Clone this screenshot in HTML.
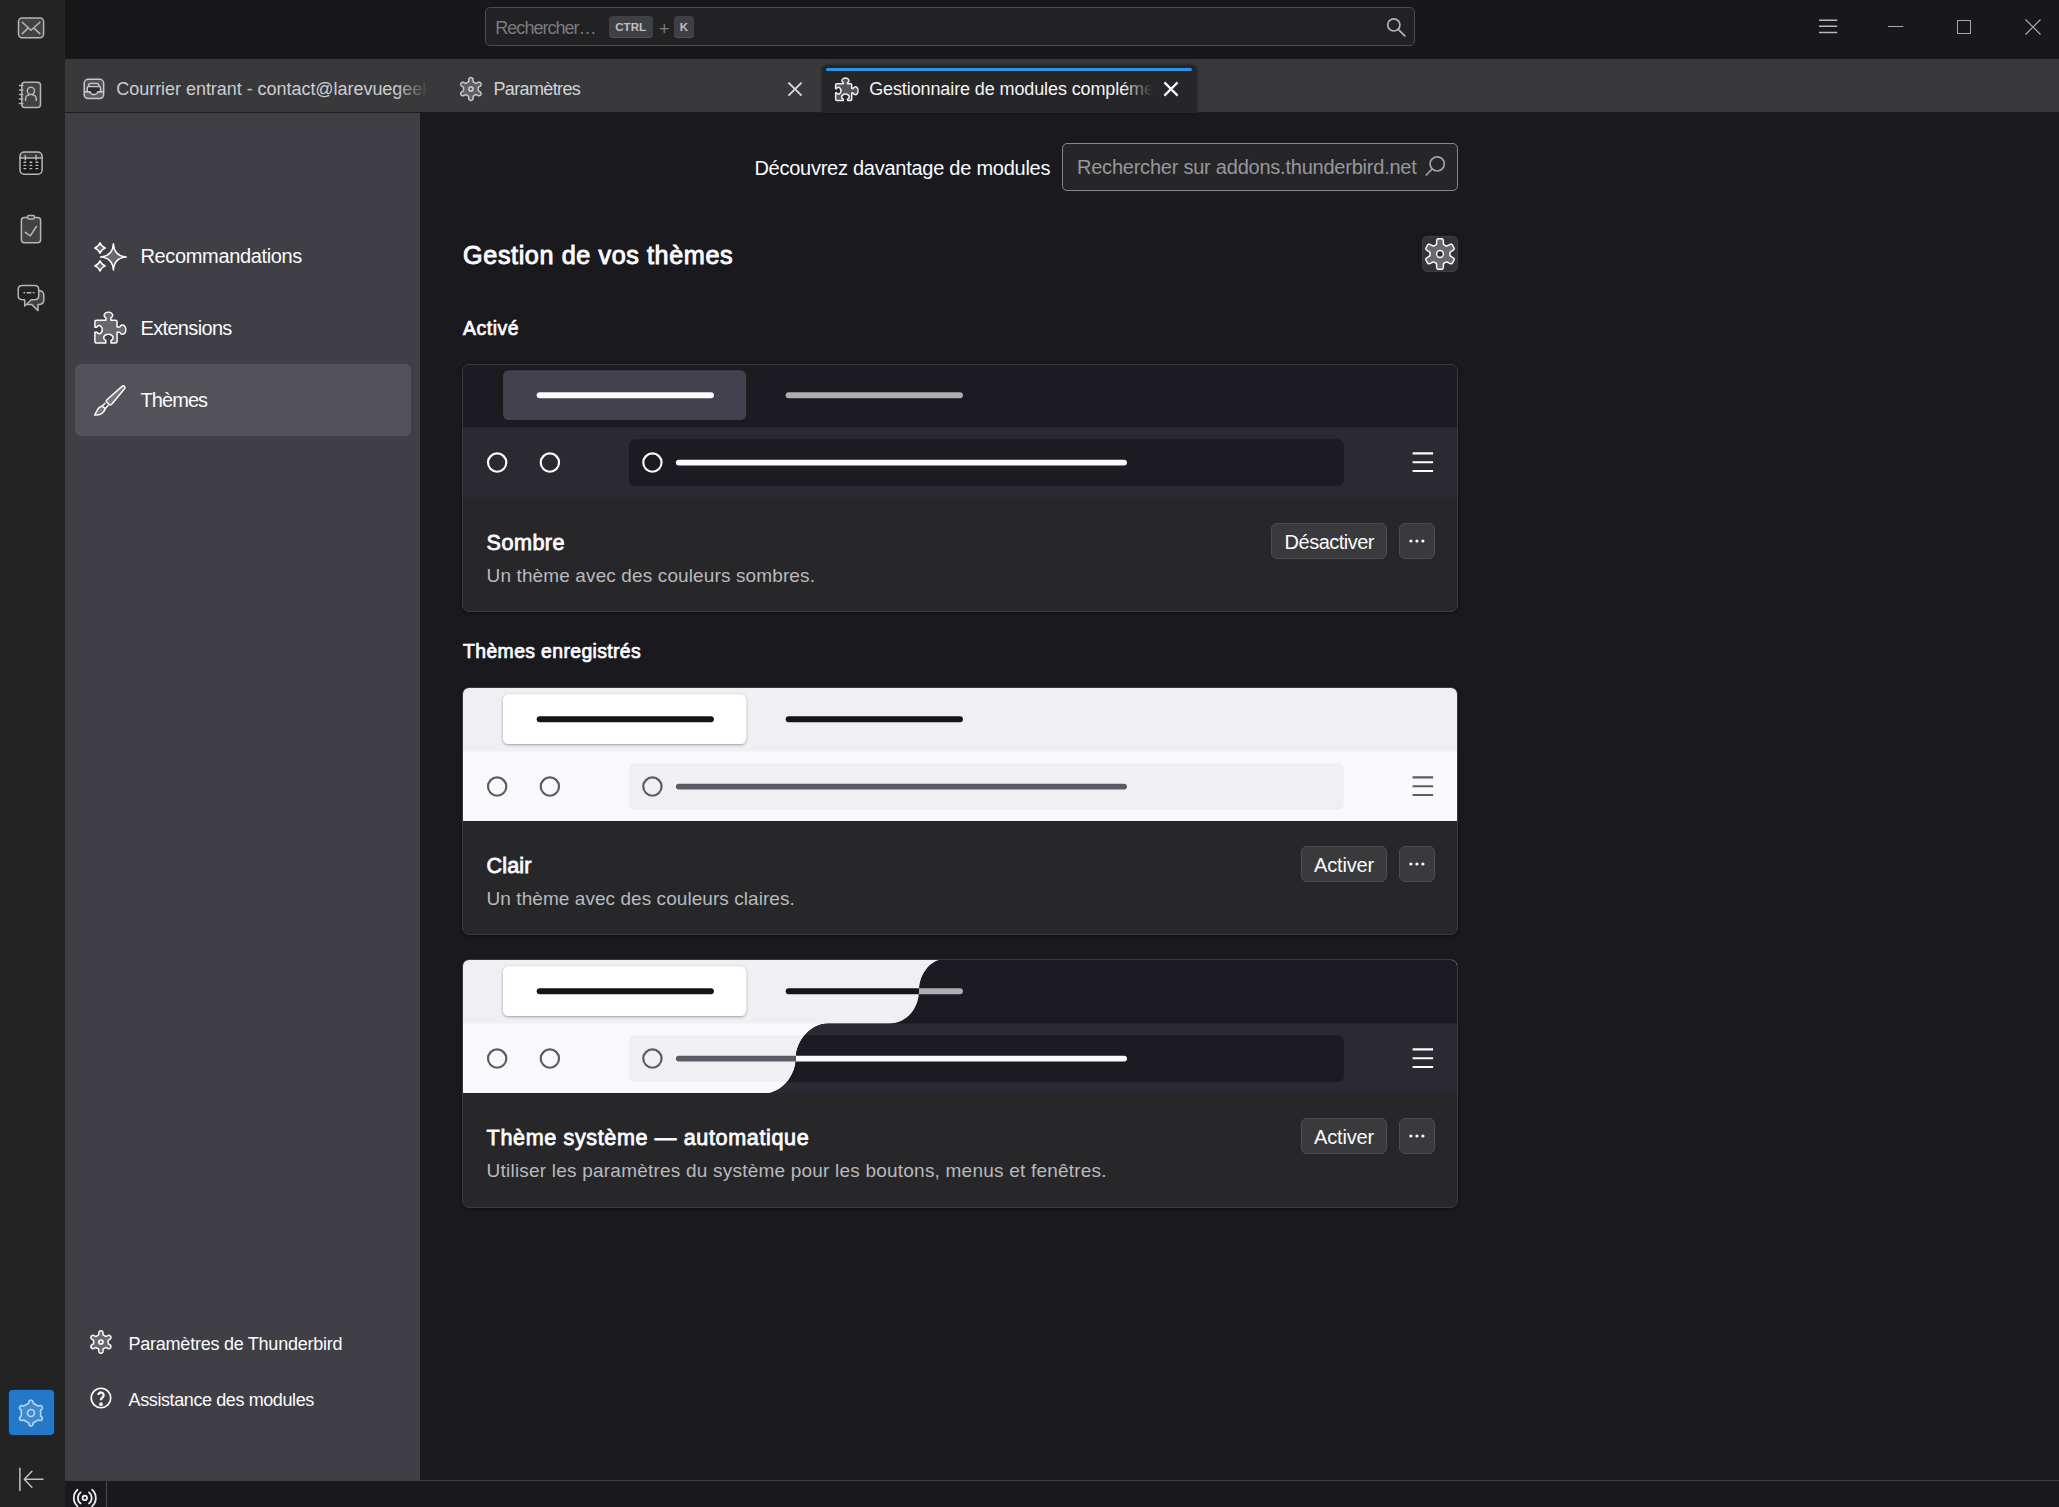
<!DOCTYPE html>
<html lang="fr">
<head>
<meta charset="utf-8">
<title>Gestionnaire de modules complémentaires</title>
<style>
*{box-sizing:border-box;margin:0;padding:0}
html,body{width:2059px;height:1507px;overflow:hidden;background:#1a1a1e;font-family:"Liberation Sans",sans-serif}
.abs{position:absolute}
.t{position:absolute;white-space:pre;font-family:"Liberation Sans",sans-serif}
svg{position:absolute;overflow:visible}
#rail{left:0;top:0;width:65px;height:1507px;background:#232324}
#titlebar{left:65px;top:0;width:1994px;height:59px;background:#18181b}
#tabbar{left:65px;top:59px;width:1994px;height:54px;background:#39393c;border-bottom:1px solid #1d1d20}
#sidebar{left:65px;top:113px;width:355px;height:1367px;background:#3f3f45}
#content{left:420px;top:113px;width:1639px;height:1367px;background:#1a1a1e}
#status{left:65px;top:1480px;width:1994px;height:27px;background:#19191c;border-top:1px solid #3c3c41}
#gsearch{left:485px;top:7px;width:930px;height:39px;border:1px solid #4b4b50;border-radius:5px;background:#222225}
.kbd{background:#3f3f46;border-radius:4px;box-shadow:0 1px 0 #52525a}
#atab{left:822px;top:65px;width:375px;height:48px;background:#262628;border-radius:5px 5px 0 0;box-shadow:0 0 3px rgba(0,0,0,.45)}
#aline{left:826px;top:68px;width:366px;height:3px;background:#2e92e6;border-radius:2px;box-shadow:0 0 0 1px #0c2a4b}
#sel{left:75px;top:364px;width:336px;height:72px;background:#525258;border-radius:6px}
#setbtn{left:9px;top:1390px;width:45px;height:45px;background:#2478c7;border-radius:4px;box-shadow:0 0 0 1px #0f3152}
#asearch{left:1062px;top:143px;width:396px;height:48px;border:1px solid #87878b;border-radius:5px;background:#262628}
#gearbtn{left:1422px;top:236px;width:36px;height:36px;background:#343438;border-radius:5px;border:1px solid #3d3d42}
.card{position:absolute;left:462px;width:996px;background:#27272a;border:1px solid #3b3b40;border-radius:7px;overflow:hidden;box-shadow:0 1px 3px rgba(0,0,0,.5)}
.card svg{left:-1px;top:-2px}
.pv{position:absolute;left:0;top:0;width:994px;height:132px;overflow:hidden}
.btn{position:absolute;height:36px;background:#3a3a3c;border:1px solid #4d4d50;border-radius:6px}
</style>
</head>
<body>
<div id="rail" class="abs"></div>
<div id="titlebar" class="abs"></div>
<div id="tabbar" class="abs"></div>
<div id="sidebar" class="abs"></div>
<div id="content" class="abs"></div>
<div id="status" class="abs"></div>

<!-- ===== title bar ===== -->
<div id="gsearch" class="abs"></div>
<div class="abs kbd" style="left:609px;top:16px;width:44px;height:21px"></div>
<div class="abs kbd" style="left:674px;top:16px;width:20px;height:21px"></div>
<span class="t" style="left:495.3px;top:17px;font-size:18px;line-height:23px;font-weight:400;color:#7b7b80;letter-spacing:-0.977px;">Rechercher…</span><span class="t" style="left:615.3px;top:20px;font-size:11.5px;line-height:15px;font-weight:700;color:#c0c0c4;letter-spacing:0.007px;">CTRL</span><span class="t" style="left:659.0px;top:18px;font-size:18px;line-height:23px;font-weight:400;color:#7b7b80;letter-spacing:-1.016px;">+</span><span class="t" style="left:679.8px;top:20px;font-size:11.5px;line-height:15px;font-weight:700;color:#c0c0c4;letter-spacing:-0.113px;">K</span>
<svg width="2059" height="1507" viewBox="0 0 2059 1507" style="left:0;top:0;pointer-events:none"><g fill="none" stroke-linecap="butt"><circle cx="1393.8" cy="24.9" r="6.1" stroke="#b4b4b8" stroke-width="1.7"/><path d="M1398.2 29.4L1404.8 35.8" stroke="#b4b4b8" stroke-width="1.7" stroke-linecap="round"/><path d="M1819 20.2h18.2M1819 26.3h18.2M1819 32.4h18.2" stroke="#b8b8bc" stroke-width="1.5"/><path d="M1888 26.5h15.2" stroke="#a8a8ac" stroke-width="1"/><rect x="1957.5" y="20.5" width="13" height="13" stroke="#a8a8ac" stroke-width="1"/><path d="M2025.5 19.5L2040.5 34.5M2040.5 19.5L2025.5 34.5" stroke="#b0b0b4" stroke-width="1.1"/></g></svg>

<!-- ===== tabs ===== -->
<div id="atab" class="abs"></div>
<div id="aline" class="abs"></div>
<span class="t" style="left:116.3px;top:78px;font-size:18px;line-height:23px;font-weight:400;color:#cdcdd0;letter-spacing:-0.040px;width:314px;overflow:hidden;">Courrier entrant - contact@larevuegeek.fr</span><span class="t" style="left:493.4px;top:78px;font-size:18px;line-height:23px;font-weight:400;color:#d2d2d5;letter-spacing:-0.625px;">Paramètres</span><span class="t" style="left:869.2px;top:78px;font-size:18px;line-height:23px;font-weight:400;color:#f4f4f5;letter-spacing:-0.110px;width:289px;overflow:hidden;">Gestionnaire de modules complémentaires</span>
<div class="abs" style="left:396px;top:70px;width:46px;height:40px;background:linear-gradient(90deg,rgba(57,57,60,0),#39393c 70%)"></div>
<div class="abs" style="left:1122px;top:74px;width:36px;height:36px;background:linear-gradient(90deg,rgba(38,38,40,0),#262628 85%)"></div>
<div class="abs" style="left:1158px;top:74px;width:38px;height:36px;background:#262628"></div>
<svg width="2059" height="1507" viewBox="0 0 2059 1507" style="left:0;top:0;pointer-events:none"><g fill="none" stroke="#c8c8cc" stroke-width="1.5" stroke-linecap="round" stroke-linejoin="round"><rect x="84.2" y="79.3" width="19.45" height="19.25" rx="4" fill="rgba(255,255,255,.13)"/><path d="M84.2 91.7H89.9C90.6 93.4 91.6 94.4 93 94.4H94.9C96.3 94.4 97.3 93.4 98 91.7H103.65V94.55Q103.65 98.55 99.65 98.55H88.2Q84.2 98.55 84.2 94.55Z" fill="rgba(255,255,255,.07)" stroke="none"/><path d="M88.8 86.6V85.3Q88.8 83.5 90.6 83.5H97Q98.8 83.5 98.8 85.3V86.6" fill="#2d2d2f"/><path d="M87.2 91.7V88.2Q87.2 86.6 88.8 86.6H99Q100.6 86.6 100.6 88.2V91.7H98C97.3 93.4 96.3 94.4 94.9 94.4H93C91.6 94.4 90.6 93.4 89.9 91.7Z" fill="#2d2d2f"/><path d="M85 91.7H89.9M98 91.7H102.9"/></g><path d="M478.27 89.00L478.27 88.94L478.27 88.87L478.27 88.81L478.27 88.74L478.27 88.68L478.27 88.61L478.27 88.55L478.27 88.48L478.27 88.42L478.27 88.36L478.27 88.29L478.27 88.23L478.27 88.16L478.27 88.09L478.27 88.03L478.27 87.96L478.27 87.90L478.27 87.83L478.27 87.77L478.27 87.70L478.27 87.63L478.27 87.57L478.27 87.50L478.28 87.43L478.30 87.36L478.34 87.28L478.42 87.20L478.54 87.09L478.72 86.98L478.94 86.85L479.19 86.70L479.47 86.54L479.76 86.38L480.02 86.21L480.25 86.05L480.43 85.90L480.57 85.76L480.68 85.63L480.77 85.50L480.84 85.38L480.90 85.26L480.96 85.14L481.00 85.02L481.03 84.91L481.06 84.79L481.08 84.68L481.09 84.57L481.10 84.46L481.10 84.35L481.10 84.24L481.09 84.14L481.08 84.04L481.06 83.94L481.04 83.84L481.01 83.74L480.98 83.64L480.94 83.55L480.90 83.46L480.86 83.37L480.81 83.28L480.76 83.19L480.70 83.11L480.64 83.03L480.58 82.95L480.51 82.88L480.44 82.80L480.36 82.74L480.29 82.67L480.20 82.61L480.12 82.55L480.03 82.49L479.93 82.44L479.83 82.39L479.73 82.35L479.62 82.31L479.51 82.27L479.39 82.24L479.27 82.22L479.14 82.21L479.01 82.20L478.86 82.20L478.71 82.21L478.54 82.24L478.35 82.30L478.13 82.38L477.88 82.49L477.60 82.64L477.32 82.80L477.04 82.97L476.78 83.12L476.56 83.24L476.37 83.33L476.22 83.39L476.11 83.42L476.02 83.41L475.95 83.39L475.89 83.36L475.83 83.33L475.77 83.30L475.71 83.27L475.65 83.23L475.60 83.20L475.54 83.17L475.48 83.13L475.43 83.10L475.37 83.07L475.31 83.04L475.26 83.00L475.20 82.97L475.14 82.94L475.09 82.91L475.03 82.87L474.98 82.84L474.92 82.81L474.86 82.78L474.81 82.74L474.75 82.71L474.70 82.68L474.64 82.65L474.59 82.62L474.53 82.58L474.47 82.55L474.42 82.52L474.36 82.49L474.31 82.45L474.25 82.42L474.20 82.39L474.14 82.36L474.08 82.33L474.03 82.29L473.97 82.26L473.91 82.23L473.86 82.20L473.80 82.16L473.75 82.13L473.69 82.10L473.63 82.06L473.57 82.03L473.52 82.00L473.46 81.97L473.40 81.93L473.35 81.90L473.29 81.86L473.23 81.82L473.18 81.77L473.13 81.70L473.10 81.59L473.07 81.43L473.06 81.22L473.05 80.96L473.05 80.67L473.06 80.35L473.06 80.02L473.05 79.71L473.02 79.43L472.98 79.20L472.93 79.01L472.87 78.85L472.81 78.70L472.74 78.58L472.66 78.47L472.58 78.36L472.50 78.27L472.42 78.18L472.34 78.10L472.25 78.03L472.16 77.96L472.07 77.90L471.97 77.84L471.88 77.79L471.79 77.75L471.69 77.71L471.59 77.67L471.50 77.64L471.40 77.62L471.30 77.59L471.20 77.58L471.10 77.57L471.00 77.56L470.90 77.56L470.80 77.56L470.70 77.57L470.60 77.58L470.50 77.59L470.40 77.62L470.30 77.64L470.21 77.67L470.11 77.71L470.01 77.75L469.92 77.79L469.83 77.84L469.73 77.90L469.64 77.96L469.55 78.03L469.46 78.10L469.38 78.18L469.30 78.27L469.22 78.36L469.14 78.47L469.06 78.58L468.99 78.70L468.93 78.85L468.87 79.01L468.82 79.20L468.78 79.43L468.75 79.71L468.74 80.02L468.74 80.35L468.75 80.67L468.75 80.96L468.74 81.22L468.73 81.43L468.70 81.59L468.67 81.70L468.62 81.77L468.57 81.82L468.51 81.86L468.45 81.90L468.40 81.93L468.34 81.97L468.28 82.00L468.23 82.03L468.17 82.06L468.11 82.10L468.05 82.13L468.00 82.16L467.94 82.20L467.89 82.23L467.83 82.26L467.77 82.29L467.72 82.33L467.66 82.36L467.60 82.39L467.55 82.42L467.49 82.45L467.44 82.49L467.38 82.52L467.33 82.55L467.27 82.58L467.21 82.62L467.16 82.65L467.10 82.68L467.05 82.71L466.99 82.74L466.94 82.78L466.88 82.81L466.82 82.84L466.77 82.87L466.71 82.91L466.66 82.94L466.60 82.97L466.54 83.00L466.49 83.04L466.43 83.07L466.37 83.10L466.32 83.13L466.26 83.17L466.20 83.20L466.15 83.23L466.09 83.27L466.03 83.30L465.97 83.33L465.91 83.36L465.85 83.39L465.78 83.41L465.69 83.42L465.58 83.39L465.43 83.33L465.24 83.24L465.02 83.12L464.76 82.97L464.48 82.80L464.20 82.64L463.92 82.49L463.67 82.38L463.45 82.30L463.26 82.24L463.09 82.21L462.94 82.20L462.79 82.20L462.66 82.21L462.53 82.22L462.41 82.24L462.29 82.27L462.18 82.31L462.07 82.35L461.97 82.39L461.87 82.44L461.77 82.49L461.68 82.55L461.60 82.61L461.51 82.67L461.44 82.74L461.36 82.80L461.29 82.88L461.22 82.95L461.16 83.03L461.10 83.11L461.04 83.19L460.99 83.28L460.94 83.37L460.90 83.46L460.86 83.55L460.82 83.64L460.79 83.74L460.76 83.84L460.74 83.94L460.72 84.04L460.71 84.14L460.70 84.24L460.70 84.35L460.70 84.46L460.71 84.57L460.72 84.68L460.74 84.79L460.77 84.91L460.80 85.02L460.84 85.14L460.90 85.26L460.96 85.38L461.03 85.50L461.12 85.63L461.23 85.76L461.37 85.90L461.55 86.05L461.78 86.21L462.04 86.38L462.33 86.54L462.61 86.70L462.86 86.85L463.08 86.98L463.26 87.09L463.38 87.20L463.46 87.28L463.50 87.36L463.52 87.43L463.53 87.50L463.53 87.57L463.53 87.63L463.53 87.70L463.53 87.77L463.53 87.83L463.53 87.90L463.53 87.96L463.53 88.03L463.53 88.09L463.53 88.16L463.53 88.23L463.53 88.29L463.53 88.36L463.53 88.42L463.53 88.48L463.53 88.55L463.53 88.61L463.53 88.68L463.53 88.74L463.53 88.81L463.53 88.87L463.53 88.94L463.53 89.00L463.53 89.06L463.53 89.13L463.53 89.19L463.53 89.26L463.53 89.32L463.53 89.39L463.53 89.45L463.53 89.52L463.53 89.58L463.53 89.64L463.53 89.71L463.53 89.77L463.53 89.84L463.53 89.91L463.53 89.97L463.53 90.04L463.53 90.10L463.53 90.17L463.53 90.23L463.53 90.30L463.53 90.37L463.53 90.43L463.53 90.50L463.52 90.57L463.50 90.64L463.46 90.72L463.38 90.80L463.26 90.91L463.08 91.02L462.86 91.15L462.61 91.30L462.33 91.46L462.04 91.62L461.78 91.79L461.55 91.95L461.37 92.10L461.23 92.24L461.12 92.37L461.03 92.50L460.96 92.62L460.90 92.74L460.84 92.86L460.80 92.98L460.77 93.09L460.74 93.21L460.72 93.32L460.71 93.43L460.70 93.54L460.70 93.65L460.70 93.76L460.71 93.86L460.72 93.96L460.74 94.06L460.76 94.16L460.79 94.26L460.82 94.36L460.86 94.45L460.90 94.54L460.94 94.63L460.99 94.72L461.04 94.81L461.10 94.89L461.16 94.97L461.22 95.05L461.29 95.12L461.36 95.20L461.44 95.26L461.51 95.33L461.60 95.39L461.68 95.45L461.77 95.51L461.87 95.56L461.97 95.61L462.07 95.65L462.18 95.69L462.29 95.73L462.41 95.76L462.53 95.78L462.66 95.79L462.79 95.80L462.94 95.80L463.09 95.79L463.26 95.76L463.45 95.70L463.67 95.62L463.92 95.51L464.20 95.36L464.48 95.20L464.76 95.03L465.02 94.88L465.24 94.76L465.43 94.67L465.58 94.61L465.69 94.58L465.78 94.59L465.85 94.61L465.91 94.64L465.97 94.67L466.03 94.70L466.09 94.73L466.15 94.77L466.20 94.80L466.26 94.83L466.32 94.87L466.37 94.90L466.43 94.93L466.49 94.96L466.54 95.00L466.60 95.03L466.66 95.06L466.71 95.09L466.77 95.13L466.82 95.16L466.88 95.19L466.94 95.22L466.99 95.26L467.05 95.29L467.10 95.32L467.16 95.35L467.21 95.38L467.27 95.42L467.33 95.45L467.38 95.48L467.44 95.51L467.49 95.55L467.55 95.58L467.60 95.61L467.66 95.64L467.72 95.67L467.77 95.71L467.83 95.74L467.89 95.77L467.94 95.80L468.00 95.84L468.05 95.87L468.11 95.90L468.17 95.94L468.23 95.97L468.28 96.00L468.34 96.03L468.40 96.07L468.45 96.10L468.51 96.14L468.57 96.18L468.62 96.23L468.67 96.30L468.70 96.41L468.73 96.57L468.74 96.78L468.75 97.04L468.75 97.33L468.74 97.65L468.74 97.98L468.75 98.29L468.78 98.57L468.82 98.80L468.87 98.99L468.93 99.15L468.99 99.30L469.06 99.42L469.14 99.53L469.22 99.64L469.30 99.73L469.38 99.82L469.46 99.90L469.55 99.97L469.64 100.04L469.73 100.10L469.83 100.16L469.92 100.21L470.01 100.25L470.11 100.29L470.21 100.33L470.30 100.36L470.40 100.38L470.50 100.41L470.60 100.42L470.70 100.43L470.80 100.44L470.90 100.44L471.00 100.44L471.10 100.43L471.20 100.42L471.30 100.41L471.40 100.38L471.50 100.36L471.59 100.33L471.69 100.29L471.79 100.25L471.88 100.21L471.97 100.16L472.07 100.10L472.16 100.04L472.25 99.97L472.34 99.90L472.42 99.82L472.50 99.73L472.58 99.64L472.66 99.53L472.74 99.42L472.81 99.30L472.87 99.15L472.93 98.99L472.98 98.80L473.02 98.57L473.05 98.29L473.06 97.98L473.06 97.65L473.05 97.33L473.05 97.04L473.06 96.78L473.07 96.57L473.10 96.41L473.13 96.30L473.18 96.23L473.23 96.18L473.29 96.14L473.35 96.10L473.40 96.07L473.46 96.03L473.52 96.00L473.57 95.97L473.63 95.94L473.69 95.90L473.75 95.87L473.80 95.84L473.86 95.80L473.91 95.77L473.97 95.74L474.03 95.71L474.08 95.67L474.14 95.64L474.20 95.61L474.25 95.58L474.31 95.55L474.36 95.51L474.42 95.48L474.47 95.45L474.53 95.42L474.59 95.38L474.64 95.35L474.70 95.32L474.75 95.29L474.81 95.26L474.86 95.22L474.92 95.19L474.98 95.16L475.03 95.13L475.09 95.09L475.14 95.06L475.20 95.03L475.26 95.00L475.31 94.96L475.37 94.93L475.43 94.90L475.48 94.87L475.54 94.83L475.60 94.80L475.65 94.77L475.71 94.73L475.77 94.70L475.83 94.67L475.89 94.64L475.95 94.61L476.02 94.59L476.11 94.58L476.22 94.61L476.37 94.67L476.56 94.76L476.78 94.88L477.04 95.03L477.32 95.20L477.60 95.36L477.88 95.51L478.13 95.62L478.35 95.70L478.54 95.76L478.71 95.79L478.86 95.80L479.01 95.80L479.14 95.79L479.27 95.78L479.39 95.76L479.51 95.73L479.62 95.69L479.73 95.65L479.83 95.61L479.93 95.56L480.03 95.51L480.12 95.45L480.20 95.39L480.29 95.33L480.36 95.26L480.44 95.20L480.51 95.12L480.58 95.05L480.64 94.97L480.70 94.89L480.76 94.81L480.81 94.72L480.86 94.63L480.90 94.54L480.94 94.45L480.98 94.36L481.01 94.26L481.04 94.16L481.06 94.06L481.08 93.96L481.09 93.86L481.10 93.76L481.10 93.65L481.10 93.54L481.09 93.43L481.08 93.32L481.06 93.21L481.03 93.09L481.00 92.98L480.96 92.86L480.90 92.74L480.84 92.62L480.77 92.50L480.68 92.37L480.57 92.24L480.43 92.10L480.25 91.95L480.02 91.79L479.76 91.62L479.47 91.46L479.19 91.30L478.94 91.15L478.72 91.02L478.54 90.91L478.42 90.80L478.34 90.72L478.30 90.64L478.28 90.57L478.27 90.50L478.27 90.43L478.27 90.37L478.27 90.30L478.27 90.23L478.27 90.17L478.27 90.10L478.27 90.04L478.27 89.97L478.27 89.91L478.27 89.84L478.27 89.77L478.27 89.71L478.27 89.64L478.27 89.58L478.27 89.52L478.27 89.45L478.27 89.39L478.27 89.32L478.27 89.26L478.27 89.19L478.27 89.13L478.27 89.06Z" fill="rgba(255,255,255,.2)" stroke="#c8c8cc" stroke-width="1.5" stroke-linejoin="round"/><circle cx="470.9" cy="89" r="2.08" fill="none" stroke="#c8c8cc" stroke-width="1.65"/><path d="M788.4 82.6L801.6 95.6M801.6 82.6L788.4 95.6" stroke="#d4d4d8" stroke-width="2" fill="none"/><g transform="translate(835.65 83.85) scale(0.7250)"><path d="M1.7 0H10.65V-1.49A4.90 3.53 0 1 1 16.35 -1.49V0H20.45Q22.15 0 22.15 1.7V6.54H24.00A3.76 5.36 0 1 1 24.00 12.46H22.15V21.25Q22.15 22.95 20.45 22.95H16.46V21.05A5.36 3.76 0 1 0 10.54 21.05V22.95H1.7Q0 22.95 0 21.25V12.35H1.27A3.31 4.67 0 1 0 1.27 6.65H0V1.7Q0 0 1.7 0Z" fill="rgba(255,255,255,.22)" stroke="#f0f0f3" stroke-width="2.069" stroke-linejoin="round"/></g><path d="M1164.4 82.4L1177.6 95.6M1177.6 82.4L1164.4 95.6" stroke="#fbfbfe" stroke-width="2.2" fill="none"/></svg>

<!-- ===== rail icons ===== -->
<div id="setbtn" class="abs"></div>
<svg width="2059" height="1507" viewBox="0 0 2059 1507" style="left:0;top:0;pointer-events:none"><g fill="none" stroke="#b6b6ba" stroke-width="1.5" stroke-linecap="round" stroke-linejoin="round"><rect x="18.5" y="18" width="25.1" height="19.7" rx="3.6" fill="rgba(255,255,255,.14)"/><path d="M22.2 22.2L31 30.3L39.9 22.2M22.3 33.6L28.4 27.9M39.8 33.6L33.7 27.9"/><rect x="21.8" y="82.3" width="18.7" height="25.2" rx="3" fill="rgba(255,255,255,.14)"/><path d="M19.4 85.6h3.4M19.4 90.1h3.4M19.4 94.6h3.4M19.4 99.1h3.4M19.4 103.6h3.4"/><circle cx="30.9" cy="90.8" r="3.6"/><path d="M25.6 100.4v-1.9a3.6 3.6 0 0 1 3.6-3.6M36.2 100.4v-1.9a3.6 3.6 0 0 0-3.6-3.6"/><rect x="20" y="152" width="22.1" height="22.2" rx="4.2" fill="rgba(0,0,0,.25)"/><path d="M20 158V156.2A4.2 4.2 0 0 1 24.2 152H37.9A4.2 4.2 0 0 1 42.1 156.2V158Z" fill="rgba(255,255,255,.14)" stroke="none"/><path d="M20 158H42.1M25.3 155.6v4.2M36.1 155.6v4.2"/><path d="M24 162.2h1.8M30 162.2h1.8M36 162.2h1.8M24 165.4h1.8M30 165.4h1.8M36 165.4h1.8M24 168.6h1.8M30 168.6h1.8M36 168.6h1.8" stroke-width="1.4"/><rect x="21.4" y="217.6" width="19.2" height="25.1" rx="3" fill="rgba(255,255,255,.14)"/><rect x="27.4" y="215.6" width="7.2" height="3.4" rx="1.7" fill="#3b3b3d"/><path d="M25.3 232.4L30.3 235.9L36.4 226.5"/><path d="M39.2 290.4Q43.8 291 43.8 295.4V299.6Q43.8 304.4 39.6 304.4H38V310.6L31.6 304.4H27.4" fill="rgba(255,255,255,.14)"/><path d="M22.4 285.5H34.8Q38.7 285.5 38.7 289.4V295.8Q38.7 299.7 34.8 299.7H31.2L24.7 306V299.7H22.4Q18.2 299.7 18.2 295.8V289.4Q18.2 285.5 22.4 285.5Z" fill="#232324"/><path d="M24 292.7h0.6M27.2 292.7h3.6M33.3 292.7h0.6" stroke-width="1.4"/><path d="M19.9 1468.3V1490.5M24.3 1479.2H43M31.9 1471.2L24.3 1479.2L31.9 1487.3" stroke="#c2c2c6"/></g><path d="M40.60 1413.05L40.60 1412.97L40.60 1412.88L40.60 1412.80L40.60 1412.71L40.60 1412.63L40.60 1412.54L40.60 1412.46L40.60 1412.38L40.60 1412.29L40.60 1412.21L40.60 1412.12L40.60 1412.04L40.60 1411.95L40.60 1411.86L40.60 1411.78L40.60 1411.69L40.60 1411.61L40.60 1411.52L40.60 1411.43L40.60 1411.35L40.60 1411.26L40.60 1411.17L40.60 1411.09L40.60 1411.00L40.60 1410.91L40.60 1410.82L40.60 1410.73L40.60 1410.64L40.60 1410.55L40.60 1410.46L40.60 1410.37L40.61 1410.28L40.64 1410.18L40.70 1410.07L40.81 1409.94L41.00 1409.78L41.23 1409.61L41.47 1409.43L41.69 1409.25L41.86 1409.08L41.98 1408.92L42.08 1408.78L42.16 1408.64L42.22 1408.50L42.26 1408.36L42.30 1408.23L42.33 1408.10L42.35 1407.98L42.36 1407.85L42.36 1407.73L42.36 1407.61L42.35 1407.49L42.33 1407.37L42.31 1407.26L42.29 1407.15L42.25 1407.04L42.22 1406.93L42.17 1406.83L42.12 1406.73L42.07 1406.63L42.01 1406.53L41.95 1406.44L41.88 1406.35L41.81 1406.27L41.73 1406.18L41.65 1406.10L41.56 1406.03L41.47 1405.96L41.37 1405.89L41.26 1405.83L41.16 1405.77L41.04 1405.72L40.92 1405.67L40.80 1405.63L40.66 1405.60L40.52 1405.57L40.38 1405.55L40.22 1405.55L40.04 1405.56L39.84 1405.59L39.61 1405.65L39.35 1405.75L39.07 1405.87L38.80 1405.98L38.58 1406.06L38.40 1406.10L38.28 1406.10L38.18 1406.07L38.10 1406.03L38.02 1405.98L37.94 1405.94L37.86 1405.89L37.78 1405.85L37.71 1405.81L37.63 1405.76L37.55 1405.72L37.48 1405.67L37.40 1405.63L37.32 1405.59L37.25 1405.54L37.17 1405.50L37.10 1405.46L37.02 1405.41L36.95 1405.37L36.88 1405.33L36.80 1405.28L36.73 1405.24L36.65 1405.20L36.58 1405.16L36.51 1405.11L36.43 1405.07L36.36 1405.03L36.29 1404.99L36.21 1404.94L36.14 1404.90L36.07 1404.86L35.99 1404.82L35.92 1404.78L35.85 1404.73L35.78 1404.69L35.70 1404.65L35.63 1404.61L35.56 1404.57L35.48 1404.52L35.41 1404.48L35.34 1404.44L35.26 1404.40L35.19 1404.35L35.12 1404.31L35.04 1404.27L34.97 1404.23L34.90 1404.18L34.82 1404.14L34.75 1404.10L34.68 1404.06L34.60 1404.01L34.53 1403.97L34.45 1403.93L34.38 1403.88L34.30 1403.84L34.23 1403.80L34.15 1403.75L34.08 1403.71L34.00 1403.67L33.92 1403.62L33.85 1403.58L33.77 1403.53L33.69 1403.49L33.61 1403.44L33.54 1403.40L33.46 1403.35L33.38 1403.30L33.31 1403.23L33.24 1403.12L33.19 1402.95L33.15 1402.72L33.11 1402.43L33.07 1402.13L33.03 1401.85L32.97 1401.62L32.89 1401.43L32.82 1401.27L32.73 1401.14L32.64 1401.02L32.55 1400.91L32.45 1400.81L32.35 1400.72L32.25 1400.64L32.15 1400.57L32.05 1400.51L31.94 1400.45L31.83 1400.40L31.73 1400.35L31.62 1400.31L31.51 1400.28L31.40 1400.26L31.29 1400.24L31.17 1400.22L31.06 1400.21L30.95 1400.21L30.84 1400.21L30.73 1400.22L30.61 1400.24L30.50 1400.26L30.39 1400.28L30.28 1400.31L30.17 1400.35L30.07 1400.40L29.96 1400.45L29.85 1400.51L29.75 1400.57L29.65 1400.64L29.55 1400.72L29.45 1400.81L29.35 1400.91L29.26 1401.02L29.17 1401.14L29.08 1401.27L29.01 1401.43L28.93 1401.62L28.87 1401.85L28.83 1402.13L28.79 1402.43L28.75 1402.72L28.71 1402.95L28.66 1403.12L28.59 1403.23L28.52 1403.30L28.44 1403.35L28.36 1403.40L28.29 1403.44L28.21 1403.49L28.13 1403.53L28.05 1403.58L27.98 1403.62L27.90 1403.67L27.82 1403.71L27.75 1403.75L27.67 1403.80L27.60 1403.84L27.52 1403.88L27.45 1403.93L27.37 1403.97L27.30 1404.01L27.22 1404.06L27.15 1404.10L27.08 1404.14L27.00 1404.18L26.93 1404.23L26.86 1404.27L26.78 1404.31L26.71 1404.35L26.64 1404.40L26.56 1404.44L26.49 1404.48L26.42 1404.52L26.34 1404.57L26.27 1404.61L26.20 1404.65L26.12 1404.69L26.05 1404.73L25.98 1404.78L25.91 1404.82L25.83 1404.86L25.76 1404.90L25.69 1404.94L25.61 1404.99L25.54 1405.03L25.47 1405.07L25.39 1405.11L25.32 1405.16L25.25 1405.20L25.17 1405.24L25.10 1405.28L25.02 1405.33L24.95 1405.37L24.88 1405.41L24.80 1405.46L24.73 1405.50L24.65 1405.54L24.58 1405.59L24.50 1405.63L24.42 1405.67L24.35 1405.72L24.27 1405.76L24.19 1405.81L24.12 1405.85L24.04 1405.89L23.96 1405.94L23.88 1405.98L23.80 1406.03L23.72 1406.07L23.62 1406.10L23.50 1406.10L23.32 1406.06L23.10 1405.98L22.83 1405.87L22.55 1405.75L22.29 1405.65L22.06 1405.59L21.86 1405.56L21.68 1405.55L21.52 1405.55L21.38 1405.57L21.24 1405.60L21.10 1405.63L20.98 1405.67L20.86 1405.72L20.74 1405.77L20.64 1405.83L20.53 1405.89L20.43 1405.96L20.34 1406.03L20.25 1406.10L20.17 1406.18L20.09 1406.27L20.02 1406.35L19.95 1406.44L19.89 1406.53L19.83 1406.63L19.78 1406.73L19.73 1406.83L19.68 1406.93L19.65 1407.04L19.61 1407.15L19.59 1407.26L19.57 1407.37L19.55 1407.49L19.54 1407.61L19.54 1407.73L19.54 1407.85L19.55 1407.98L19.57 1408.10L19.60 1408.23L19.64 1408.36L19.68 1408.50L19.74 1408.64L19.82 1408.78L19.92 1408.92L20.04 1409.08L20.21 1409.25L20.43 1409.43L20.67 1409.61L20.90 1409.78L21.09 1409.94L21.20 1410.07L21.26 1410.18L21.29 1410.28L21.30 1410.37L21.30 1410.46L21.30 1410.55L21.30 1410.64L21.30 1410.73L21.30 1410.82L21.30 1410.91L21.30 1411.00L21.30 1411.09L21.30 1411.17L21.30 1411.26L21.30 1411.35L21.30 1411.43L21.30 1411.52L21.30 1411.61L21.30 1411.69L21.30 1411.78L21.30 1411.86L21.30 1411.95L21.30 1412.04L21.30 1412.12L21.30 1412.21L21.30 1412.29L21.30 1412.38L21.30 1412.46L21.30 1412.54L21.30 1412.63L21.30 1412.71L21.30 1412.80L21.30 1412.88L21.30 1412.97L21.30 1413.05L21.30 1413.13L21.30 1413.22L21.30 1413.30L21.30 1413.39L21.30 1413.47L21.30 1413.56L21.30 1413.64L21.30 1413.72L21.30 1413.81L21.30 1413.89L21.30 1413.98L21.30 1414.06L21.30 1414.15L21.30 1414.24L21.30 1414.32L21.30 1414.41L21.30 1414.49L21.30 1414.58L21.30 1414.67L21.30 1414.75L21.30 1414.84L21.30 1414.93L21.30 1415.01L21.30 1415.10L21.30 1415.19L21.30 1415.28L21.30 1415.37L21.30 1415.46L21.30 1415.55L21.30 1415.64L21.30 1415.73L21.29 1415.82L21.26 1415.92L21.20 1416.03L21.09 1416.16L20.90 1416.32L20.67 1416.49L20.43 1416.67L20.21 1416.85L20.04 1417.02L19.92 1417.18L19.82 1417.32L19.74 1417.46L19.68 1417.60L19.64 1417.74L19.60 1417.87L19.57 1418.00L19.55 1418.12L19.54 1418.25L19.54 1418.37L19.54 1418.49L19.55 1418.61L19.57 1418.73L19.59 1418.84L19.61 1418.95L19.65 1419.06L19.68 1419.17L19.73 1419.27L19.78 1419.37L19.83 1419.47L19.89 1419.57L19.95 1419.66L20.02 1419.75L20.09 1419.83L20.17 1419.92L20.25 1420.00L20.34 1420.07L20.43 1420.14L20.53 1420.21L20.64 1420.27L20.74 1420.33L20.86 1420.38L20.98 1420.43L21.10 1420.47L21.24 1420.50L21.38 1420.53L21.52 1420.55L21.68 1420.55L21.86 1420.54L22.06 1420.51L22.29 1420.45L22.55 1420.35L22.83 1420.23L23.10 1420.12L23.32 1420.04L23.50 1420.00L23.62 1420.00L23.72 1420.03L23.80 1420.07L23.88 1420.12L23.96 1420.16L24.04 1420.21L24.12 1420.25L24.19 1420.29L24.27 1420.34L24.35 1420.38L24.42 1420.43L24.50 1420.47L24.58 1420.51L24.65 1420.56L24.73 1420.60L24.80 1420.64L24.88 1420.69L24.95 1420.73L25.02 1420.77L25.10 1420.82L25.17 1420.86L25.25 1420.90L25.32 1420.94L25.39 1420.99L25.47 1421.03L25.54 1421.07L25.61 1421.11L25.69 1421.16L25.76 1421.20L25.83 1421.24L25.91 1421.28L25.98 1421.32L26.05 1421.37L26.12 1421.41L26.20 1421.45L26.27 1421.49L26.34 1421.53L26.42 1421.58L26.49 1421.62L26.56 1421.66L26.64 1421.70L26.71 1421.75L26.78 1421.79L26.86 1421.83L26.93 1421.87L27.00 1421.92L27.08 1421.96L27.15 1422.00L27.22 1422.04L27.30 1422.09L27.37 1422.13L27.45 1422.17L27.52 1422.22L27.60 1422.26L27.67 1422.30L27.75 1422.35L27.82 1422.39L27.90 1422.43L27.98 1422.48L28.05 1422.52L28.13 1422.57L28.21 1422.61L28.29 1422.66L28.36 1422.70L28.44 1422.75L28.52 1422.80L28.59 1422.87L28.66 1422.98L28.71 1423.15L28.75 1423.38L28.79 1423.67L28.83 1423.97L28.87 1424.25L28.93 1424.48L29.01 1424.67L29.08 1424.83L29.17 1424.96L29.26 1425.08L29.35 1425.19L29.45 1425.29L29.55 1425.38L29.65 1425.46L29.75 1425.53L29.85 1425.59L29.96 1425.65L30.07 1425.70L30.17 1425.75L30.28 1425.79L30.39 1425.82L30.50 1425.84L30.61 1425.86L30.73 1425.88L30.84 1425.89L30.95 1425.89L31.06 1425.89L31.17 1425.88L31.29 1425.86L31.40 1425.84L31.51 1425.82L31.62 1425.79L31.73 1425.75L31.83 1425.70L31.94 1425.65L32.05 1425.59L32.15 1425.53L32.25 1425.46L32.35 1425.38L32.45 1425.29L32.55 1425.19L32.64 1425.08L32.73 1424.96L32.82 1424.83L32.89 1424.67L32.97 1424.48L33.03 1424.25L33.07 1423.97L33.11 1423.67L33.15 1423.38L33.19 1423.15L33.24 1422.98L33.31 1422.87L33.38 1422.80L33.46 1422.75L33.54 1422.70L33.61 1422.66L33.69 1422.61L33.77 1422.57L33.85 1422.52L33.92 1422.48L34.00 1422.43L34.08 1422.39L34.15 1422.35L34.23 1422.30L34.30 1422.26L34.38 1422.22L34.45 1422.17L34.53 1422.13L34.60 1422.09L34.68 1422.04L34.75 1422.00L34.82 1421.96L34.90 1421.92L34.97 1421.87L35.04 1421.83L35.12 1421.79L35.19 1421.75L35.26 1421.70L35.34 1421.66L35.41 1421.62L35.48 1421.58L35.56 1421.53L35.63 1421.49L35.70 1421.45L35.78 1421.41L35.85 1421.37L35.92 1421.32L35.99 1421.28L36.07 1421.24L36.14 1421.20L36.21 1421.16L36.29 1421.11L36.36 1421.07L36.43 1421.03L36.51 1420.99L36.58 1420.94L36.65 1420.90L36.73 1420.86L36.80 1420.82L36.88 1420.77L36.95 1420.73L37.02 1420.69L37.10 1420.64L37.17 1420.60L37.25 1420.56L37.32 1420.51L37.40 1420.47L37.48 1420.43L37.55 1420.38L37.63 1420.34L37.71 1420.29L37.78 1420.25L37.86 1420.21L37.94 1420.16L38.02 1420.12L38.10 1420.07L38.18 1420.03L38.28 1420.00L38.40 1420.00L38.58 1420.04L38.80 1420.12L39.07 1420.23L39.35 1420.35L39.61 1420.45L39.84 1420.51L40.04 1420.54L40.22 1420.55L40.38 1420.55L40.52 1420.53L40.66 1420.50L40.80 1420.47L40.92 1420.43L41.04 1420.38L41.16 1420.33L41.26 1420.27L41.37 1420.21L41.47 1420.14L41.56 1420.07L41.65 1420.00L41.73 1419.92L41.81 1419.83L41.88 1419.75L41.95 1419.66L42.01 1419.57L42.07 1419.47L42.12 1419.37L42.17 1419.27L42.22 1419.17L42.25 1419.06L42.29 1418.95L42.31 1418.84L42.33 1418.73L42.35 1418.61L42.36 1418.49L42.36 1418.37L42.36 1418.25L42.35 1418.12L42.33 1418.00L42.30 1417.87L42.26 1417.74L42.22 1417.60L42.16 1417.46L42.08 1417.32L41.98 1417.18L41.86 1417.02L41.69 1416.85L41.47 1416.67L41.23 1416.49L41.00 1416.32L40.81 1416.16L40.70 1416.03L40.64 1415.92L40.61 1415.82L40.60 1415.73L40.60 1415.64L40.60 1415.55L40.60 1415.46L40.60 1415.37L40.60 1415.28L40.60 1415.19L40.60 1415.10L40.60 1415.01L40.60 1414.93L40.60 1414.84L40.60 1414.75L40.60 1414.67L40.60 1414.58L40.60 1414.49L40.60 1414.41L40.60 1414.32L40.60 1414.24L40.60 1414.15L40.60 1414.06L40.60 1413.98L40.60 1413.89L40.60 1413.81L40.60 1413.72L40.60 1413.64L40.60 1413.56L40.60 1413.47L40.60 1413.39L40.60 1413.30L40.60 1413.22L40.60 1413.13Z" fill="rgba(255,255,255,.13)" stroke="#b9d6f2" stroke-width="1.6" stroke-linejoin="round"/><circle cx="30.95" cy="1413.05" r="3.50" fill="none" stroke="#b9d6f2" stroke-width="1.60"/></svg>

<!-- ===== sidebar ===== -->
<div id="sel" class="abs"></div>
<span class="t" style="left:140.5px;top:243px;font-size:20px;line-height:26px;font-weight:400;color:#fbfbfe;letter-spacing:-0.350px;">Recommandations</span><span class="t" style="left:140.5px;top:315px;font-size:20px;line-height:26px;font-weight:400;color:#fbfbfe;letter-spacing:-0.664px;">Extensions</span><span class="t" style="left:140.5px;top:387px;font-size:20px;line-height:26px;font-weight:400;color:#fbfbfe;letter-spacing:-0.925px;">Thèmes</span><span class="t" style="left:128.6px;top:1333px;font-size:18px;line-height:23px;font-weight:400;color:#fbfbfe;letter-spacing:-0.248px;">Paramètres de Thunderbird</span><span class="t" style="left:128.6px;top:1389px;font-size:18px;line-height:23px;font-weight:400;color:#fbfbfe;letter-spacing:-0.400px;">Assistance des modules</span>
<svg width="2059" height="1507" viewBox="0 0 2059 1507" style="left:0;top:0;pointer-events:none"><g fill="rgba(255,255,255,.22)" stroke="#fbfbfe" stroke-width="1.5" stroke-linejoin="round" stroke-linecap="round"><path d="M113.4 243.85Q114.174 256.164 126.30000000000001 256.95Q114.174 257.736 113.4 270.05Q112.626 257.736 100.5 256.95Q112.626 256.164 113.4 243.85Z"/><path d="M100.0 242.75Q101.4175 246.546 105.25 247.95Q101.4175 249.35399999999998 100.0 253.14999999999998Q98.5825 249.35399999999998 94.75 247.95Q98.5825 246.546 100.0 242.75Z"/><path d="M100.0 260.7Q101.4175 264.496 105.25 265.9Q101.4175 267.304 100.0 271.09999999999997Q98.5825 267.304 94.75 265.9Q98.5825 264.496 100.0 260.7Z"/><path d="M122.04 386.39A1.75 1.75 0 0 1 124.56 388.81L111.9 403.9Q110.68 405.49 109.3 404.6L106.9 402.3Q105.6 401.2 106.9 399.8Z"/><path d="M104.9 403.3L102.1 406.3M108.1 405.5L105.3 408.5" fill="none"/><path d="M102.1 406.3C99.6 406.6 97.9 408.6 96.9 410.8L94.6 415C97.5 415.2 100.6 414.6 102.4 413C104 411.6 105 410.2 105.3 408.5Z"/></g><g transform="translate(94.90 320.15) scale(1.0000)"><path d="M1.7 0H11.00V-2.28A4.30 3.10 0 1 1 16.00 -2.28V0H20.45Q22.15 0 22.15 1.7V6.90H24.85A3.30 4.70 0 1 1 24.85 12.10H22.15V21.25Q22.15 22.95 20.45 22.95H16.10V20.20A4.70 3.30 0 1 0 10.90 20.20V22.95H1.7Q0 22.95 0 21.25V12.00H2.00A2.90 4.10 0 1 0 2.00 7.00H0V1.7Q0 0 1.7 0Z" fill="rgba(255,255,255,.22)" stroke="#fbfbfe" stroke-width="1.500" stroke-linejoin="round"/></g><path d="M108.15 1342.00L108.15 1341.94L108.15 1341.87L108.15 1341.81L108.15 1341.75L108.15 1341.68L108.15 1341.62L108.15 1341.56L108.15 1341.49L108.15 1341.43L108.15 1341.37L108.15 1341.30L108.15 1341.24L108.15 1341.17L108.15 1341.11L108.15 1341.05L108.15 1340.98L108.15 1340.92L108.15 1340.85L108.15 1340.79L108.15 1340.72L108.15 1340.66L108.15 1340.59L108.15 1340.52L108.16 1340.46L108.18 1340.39L108.22 1340.31L108.29 1340.22L108.42 1340.13L108.59 1340.01L108.80 1339.88L109.06 1339.74L109.33 1339.58L109.61 1339.42L109.87 1339.26L110.09 1339.10L110.27 1338.96L110.40 1338.82L110.51 1338.69L110.60 1338.56L110.67 1338.44L110.73 1338.32L110.78 1338.21L110.82 1338.09L110.85 1337.98L110.88 1337.87L110.90 1337.76L110.91 1337.65L110.92 1337.54L110.92 1337.43L110.92 1337.33L110.91 1337.22L110.90 1337.12L110.88 1337.02L110.86 1336.93L110.83 1336.83L110.80 1336.74L110.77 1336.64L110.73 1336.55L110.68 1336.46L110.64 1336.38L110.59 1336.29L110.53 1336.21L110.47 1336.13L110.41 1336.06L110.34 1335.98L110.27 1335.91L110.20 1335.84L110.12 1335.78L110.04 1335.72L109.96 1335.66L109.87 1335.60L109.77 1335.55L109.68 1335.51L109.58 1335.46L109.47 1335.42L109.36 1335.39L109.25 1335.36L109.13 1335.34L109.00 1335.32L108.87 1335.32L108.72 1335.32L108.57 1335.33L108.41 1335.36L108.22 1335.41L108.00 1335.49L107.76 1335.60L107.49 1335.75L107.21 1335.91L106.94 1336.07L106.69 1336.21L106.47 1336.34L106.28 1336.43L106.13 1336.48L106.02 1336.51L105.94 1336.50L105.87 1336.48L105.80 1336.46L105.75 1336.42L105.69 1336.39L105.63 1336.36L105.58 1336.33L105.52 1336.29L105.46 1336.26L105.41 1336.23L105.35 1336.20L105.30 1336.17L105.24 1336.13L105.19 1336.10L105.13 1336.07L105.07 1336.04L105.02 1336.01L104.96 1335.97L104.91 1335.94L104.85 1335.91L104.80 1335.88L104.74 1335.85L104.69 1335.82L104.64 1335.78L104.58 1335.75L104.53 1335.72L104.47 1335.69L104.42 1335.66L104.36 1335.63L104.31 1335.59L104.25 1335.56L104.20 1335.53L104.14 1335.50L104.09 1335.47L104.03 1335.44L103.98 1335.40L103.92 1335.37L103.87 1335.34L103.81 1335.31L103.75 1335.28L103.70 1335.24L103.64 1335.21L103.59 1335.18L103.53 1335.15L103.47 1335.11L103.42 1335.08L103.36 1335.05L103.31 1335.02L103.25 1334.98L103.19 1334.94L103.14 1334.89L103.10 1334.82L103.06 1334.71L103.04 1334.55L103.02 1334.35L103.02 1334.10L103.02 1333.80L103.02 1333.49L103.02 1333.16L103.01 1332.86L102.99 1332.59L102.95 1332.37L102.90 1332.18L102.84 1332.02L102.78 1331.88L102.71 1331.76L102.63 1331.65L102.56 1331.55L102.48 1331.45L102.39 1331.37L102.31 1331.29L102.22 1331.22L102.14 1331.15L102.05 1331.09L101.96 1331.04L101.86 1330.99L101.77 1330.94L101.68 1330.90L101.58 1330.87L101.48 1330.84L101.39 1330.81L101.29 1330.79L101.19 1330.78L101.10 1330.77L101.00 1330.76L100.90 1330.76L100.80 1330.76L100.70 1330.77L100.61 1330.78L100.51 1330.79L100.41 1330.81L100.32 1330.84L100.22 1330.87L100.12 1330.90L100.03 1330.94L99.94 1330.99L99.84 1331.04L99.75 1331.09L99.66 1331.15L99.58 1331.22L99.49 1331.29L99.41 1331.37L99.32 1331.45L99.24 1331.55L99.17 1331.65L99.09 1331.76L99.02 1331.88L98.96 1332.02L98.90 1332.18L98.85 1332.37L98.81 1332.59L98.79 1332.86L98.78 1333.16L98.78 1333.49L98.78 1333.80L98.78 1334.10L98.78 1334.35L98.76 1334.55L98.74 1334.71L98.70 1334.82L98.66 1334.89L98.61 1334.94L98.55 1334.98L98.49 1335.02L98.44 1335.05L98.38 1335.08L98.33 1335.11L98.27 1335.15L98.21 1335.18L98.16 1335.21L98.10 1335.24L98.05 1335.28L97.99 1335.31L97.93 1335.34L97.88 1335.37L97.82 1335.40L97.77 1335.44L97.71 1335.47L97.66 1335.50L97.60 1335.53L97.55 1335.56L97.49 1335.59L97.44 1335.63L97.38 1335.66L97.33 1335.69L97.27 1335.72L97.22 1335.75L97.16 1335.78L97.11 1335.82L97.06 1335.85L97.00 1335.88L96.95 1335.91L96.89 1335.94L96.84 1335.97L96.78 1336.01L96.73 1336.04L96.67 1336.07L96.61 1336.10L96.56 1336.13L96.50 1336.17L96.45 1336.20L96.39 1336.23L96.34 1336.26L96.28 1336.29L96.22 1336.33L96.17 1336.36L96.11 1336.39L96.05 1336.42L96.00 1336.46L95.93 1336.48L95.86 1336.50L95.78 1336.51L95.67 1336.48L95.52 1336.43L95.33 1336.34L95.11 1336.21L94.86 1336.07L94.59 1335.91L94.31 1335.75L94.04 1335.60L93.80 1335.49L93.58 1335.41L93.39 1335.36L93.23 1335.33L93.08 1335.32L92.93 1335.32L92.80 1335.32L92.67 1335.34L92.55 1335.36L92.44 1335.39L92.33 1335.42L92.22 1335.46L92.12 1335.51L92.03 1335.55L91.93 1335.60L91.84 1335.66L91.76 1335.72L91.68 1335.78L91.60 1335.84L91.53 1335.91L91.46 1335.98L91.39 1336.06L91.33 1336.13L91.27 1336.21L91.21 1336.29L91.16 1336.38L91.12 1336.46L91.07 1336.55L91.03 1336.64L91.00 1336.74L90.97 1336.83L90.94 1336.93L90.92 1337.02L90.90 1337.12L90.89 1337.22L90.88 1337.33L90.88 1337.43L90.88 1337.54L90.89 1337.65L90.90 1337.76L90.92 1337.87L90.95 1337.98L90.98 1338.09L91.02 1338.21L91.07 1338.32L91.13 1338.44L91.20 1338.56L91.29 1338.69L91.40 1338.82L91.53 1338.96L91.71 1339.10L91.93 1339.26L92.19 1339.42L92.47 1339.58L92.74 1339.74L93.00 1339.88L93.21 1340.01L93.38 1340.13L93.51 1340.22L93.58 1340.31L93.62 1340.39L93.64 1340.46L93.65 1340.52L93.65 1340.59L93.65 1340.66L93.65 1340.72L93.65 1340.79L93.65 1340.85L93.65 1340.92L93.65 1340.98L93.65 1341.05L93.65 1341.11L93.65 1341.17L93.65 1341.24L93.65 1341.30L93.65 1341.37L93.65 1341.43L93.65 1341.49L93.65 1341.56L93.65 1341.62L93.65 1341.68L93.65 1341.75L93.65 1341.81L93.65 1341.87L93.65 1341.94L93.65 1342.00L93.65 1342.06L93.65 1342.13L93.65 1342.19L93.65 1342.25L93.65 1342.32L93.65 1342.38L93.65 1342.44L93.65 1342.51L93.65 1342.57L93.65 1342.63L93.65 1342.70L93.65 1342.76L93.65 1342.83L93.65 1342.89L93.65 1342.95L93.65 1343.02L93.65 1343.08L93.65 1343.15L93.65 1343.21L93.65 1343.28L93.65 1343.34L93.65 1343.41L93.65 1343.48L93.64 1343.54L93.62 1343.61L93.58 1343.69L93.51 1343.78L93.38 1343.87L93.21 1343.99L93.00 1344.12L92.74 1344.26L92.47 1344.42L92.19 1344.58L91.93 1344.74L91.71 1344.90L91.53 1345.04L91.40 1345.18L91.29 1345.31L91.20 1345.44L91.13 1345.56L91.07 1345.68L91.02 1345.79L90.98 1345.91L90.95 1346.02L90.92 1346.13L90.90 1346.24L90.89 1346.35L90.88 1346.46L90.88 1346.57L90.88 1346.67L90.89 1346.78L90.90 1346.88L90.92 1346.98L90.94 1347.07L90.97 1347.17L91.00 1347.26L91.03 1347.36L91.07 1347.45L91.12 1347.54L91.16 1347.62L91.21 1347.71L91.27 1347.79L91.33 1347.87L91.39 1347.94L91.46 1348.02L91.53 1348.09L91.60 1348.16L91.68 1348.22L91.76 1348.28L91.84 1348.34L91.93 1348.40L92.03 1348.45L92.12 1348.49L92.22 1348.54L92.33 1348.58L92.44 1348.61L92.55 1348.64L92.67 1348.66L92.80 1348.68L92.93 1348.68L93.08 1348.68L93.23 1348.67L93.39 1348.64L93.58 1348.59L93.80 1348.51L94.04 1348.40L94.31 1348.25L94.59 1348.09L94.86 1347.93L95.11 1347.79L95.33 1347.66L95.52 1347.57L95.67 1347.52L95.78 1347.49L95.86 1347.50L95.93 1347.52L96.00 1347.54L96.05 1347.58L96.11 1347.61L96.17 1347.64L96.22 1347.67L96.28 1347.71L96.34 1347.74L96.39 1347.77L96.45 1347.80L96.50 1347.83L96.56 1347.87L96.61 1347.90L96.67 1347.93L96.73 1347.96L96.78 1347.99L96.84 1348.03L96.89 1348.06L96.95 1348.09L97.00 1348.12L97.06 1348.15L97.11 1348.18L97.16 1348.22L97.22 1348.25L97.27 1348.28L97.33 1348.31L97.38 1348.34L97.44 1348.37L97.49 1348.41L97.55 1348.44L97.60 1348.47L97.66 1348.50L97.71 1348.53L97.77 1348.56L97.82 1348.60L97.88 1348.63L97.93 1348.66L97.99 1348.69L98.05 1348.72L98.10 1348.76L98.16 1348.79L98.21 1348.82L98.27 1348.85L98.33 1348.89L98.38 1348.92L98.44 1348.95L98.49 1348.98L98.55 1349.02L98.61 1349.06L98.66 1349.11L98.70 1349.18L98.74 1349.29L98.76 1349.45L98.78 1349.65L98.78 1349.90L98.78 1350.20L98.78 1350.51L98.78 1350.84L98.79 1351.14L98.81 1351.41L98.85 1351.63L98.90 1351.82L98.96 1351.98L99.02 1352.12L99.09 1352.24L99.17 1352.35L99.24 1352.45L99.32 1352.55L99.41 1352.63L99.49 1352.71L99.58 1352.78L99.66 1352.85L99.75 1352.91L99.84 1352.96L99.94 1353.01L100.03 1353.06L100.12 1353.10L100.22 1353.13L100.32 1353.16L100.41 1353.19L100.51 1353.21L100.61 1353.22L100.70 1353.23L100.80 1353.24L100.90 1353.24L101.00 1353.24L101.10 1353.23L101.19 1353.22L101.29 1353.21L101.39 1353.19L101.48 1353.16L101.58 1353.13L101.68 1353.10L101.77 1353.06L101.86 1353.01L101.96 1352.96L102.05 1352.91L102.14 1352.85L102.22 1352.78L102.31 1352.71L102.39 1352.63L102.48 1352.55L102.56 1352.45L102.63 1352.35L102.71 1352.24L102.78 1352.12L102.84 1351.98L102.90 1351.82L102.95 1351.63L102.99 1351.41L103.01 1351.14L103.02 1350.84L103.02 1350.51L103.02 1350.20L103.02 1349.90L103.02 1349.65L103.04 1349.45L103.06 1349.29L103.10 1349.18L103.14 1349.11L103.19 1349.06L103.25 1349.02L103.31 1348.98L103.36 1348.95L103.42 1348.92L103.47 1348.89L103.53 1348.85L103.59 1348.82L103.64 1348.79L103.70 1348.76L103.75 1348.72L103.81 1348.69L103.87 1348.66L103.92 1348.63L103.98 1348.60L104.03 1348.56L104.09 1348.53L104.14 1348.50L104.20 1348.47L104.25 1348.44L104.31 1348.41L104.36 1348.37L104.42 1348.34L104.47 1348.31L104.53 1348.28L104.58 1348.25L104.64 1348.22L104.69 1348.18L104.74 1348.15L104.80 1348.12L104.85 1348.09L104.91 1348.06L104.96 1348.03L105.02 1347.99L105.07 1347.96L105.13 1347.93L105.19 1347.90L105.24 1347.87L105.30 1347.83L105.35 1347.80L105.41 1347.77L105.46 1347.74L105.52 1347.71L105.58 1347.67L105.63 1347.64L105.69 1347.61L105.75 1347.58L105.80 1347.54L105.87 1347.52L105.94 1347.50L106.02 1347.49L106.13 1347.52L106.28 1347.57L106.47 1347.66L106.69 1347.79L106.94 1347.93L107.21 1348.09L107.49 1348.25L107.76 1348.40L108.00 1348.51L108.22 1348.59L108.41 1348.64L108.57 1348.67L108.72 1348.68L108.87 1348.68L109.00 1348.68L109.13 1348.66L109.25 1348.64L109.36 1348.61L109.47 1348.58L109.58 1348.54L109.68 1348.49L109.77 1348.45L109.87 1348.40L109.96 1348.34L110.04 1348.28L110.12 1348.22L110.20 1348.16L110.27 1348.09L110.34 1348.02L110.41 1347.94L110.47 1347.87L110.53 1347.79L110.59 1347.71L110.64 1347.62L110.68 1347.54L110.73 1347.45L110.77 1347.36L110.80 1347.26L110.83 1347.17L110.86 1347.07L110.88 1346.98L110.90 1346.88L110.91 1346.78L110.92 1346.67L110.92 1346.57L110.92 1346.46L110.91 1346.35L110.90 1346.24L110.88 1346.13L110.85 1346.02L110.82 1345.91L110.78 1345.79L110.73 1345.68L110.67 1345.56L110.60 1345.44L110.51 1345.31L110.40 1345.18L110.27 1345.04L110.09 1344.90L109.87 1344.74L109.61 1344.58L109.33 1344.42L109.06 1344.26L108.80 1344.12L108.59 1343.99L108.42 1343.87L108.29 1343.78L108.22 1343.69L108.18 1343.61L108.16 1343.54L108.15 1343.48L108.15 1343.41L108.15 1343.34L108.15 1343.28L108.15 1343.21L108.15 1343.15L108.15 1343.08L108.15 1343.02L108.15 1342.95L108.15 1342.89L108.15 1342.83L108.15 1342.76L108.15 1342.70L108.15 1342.63L108.15 1342.57L108.15 1342.51L108.15 1342.44L108.15 1342.38L108.15 1342.32L108.15 1342.25L108.15 1342.19L108.15 1342.13L108.15 1342.06Z" fill="rgba(255,255,255,.22)" stroke="#fbfbfe" stroke-width="1.5" stroke-linejoin="round"/><circle cx="100.9" cy="1342" r="2.05" fill="none" stroke="#fbfbfe" stroke-width="1.65"/><circle cx="100.97" cy="1397.97" r="9.75" fill="none" stroke="#fbfbfe" stroke-width="1.65"/><path d="M98.32 1395.07A2.65 2.65 0 1 1 102.87 1397.02Q100.97 1398.27 100.97 1400.37" fill="none" stroke="#fbfbfe" stroke-width="2.3" stroke-linecap="butt"/><circle cx="100.97" cy="1404.17" r="1.85" fill="#fbfbfe"/></svg>

<!-- ===== content header ===== -->
<span class="t" style="left:754.4px;top:155px;font-size:20px;line-height:26px;font-weight:400;color:#fbfbfe;letter-spacing:-0.258px;">Découvrez davantage de modules</span>
<div id="asearch" class="abs"></div>
<span class="t" style="left:1077.0px;top:154px;font-size:20px;line-height:26px;font-weight:400;color:#97979c;letter-spacing:-0.227px;">Rechercher sur addons.thunderbird.net</span>
<span class="t" style="left:463.1px;top:239px;font-size:25.2px;line-height:33px;font-weight:400;color:#fbfbfe;letter-spacing:0.595px;-webkit-text-stroke:0.96px #fbfbfe;">Gestion de vos thèmes</span>
<div id="gearbtn" class="abs"></div>
<span class="t" style="left:463.1px;top:316px;font-size:19.4px;line-height:25px;font-weight:400;color:#fbfbfe;letter-spacing:0.531px;-webkit-text-stroke:0.74px #fbfbfe;">Activé</span><span class="t" style="left:463.1px;top:639px;font-size:19.4px;line-height:25px;font-weight:400;color:#fbfbfe;letter-spacing:0.369px;-webkit-text-stroke:0.74px #fbfbfe;">Thèmes enregistrés</span>
<svg width="2059" height="1507" viewBox="0 0 2059 1507" style="left:0;top:0;pointer-events:none"><g fill="none" stroke="#a4a4a8" stroke-width="1.7" stroke-linecap="round"><circle cx="1437.2" cy="163.9" r="7.1"/><path d="M1432.1 169L1426.3 175"/></g><path d="M1450.00 254.00L1450.00 253.91L1450.00 253.83L1450.00 253.74L1449.99 253.65L1449.99 253.56L1449.99 253.48L1449.98 253.39L1449.98 253.30L1449.97 253.22L1449.97 253.13L1449.96 253.04L1449.96 252.95L1449.97 252.86L1449.97 252.78L1449.99 252.69L1450.01 252.59L1450.05 252.50L1450.10 252.40L1450.17 252.30L1450.26 252.19L1450.38 252.08L1450.52 251.96L1450.69 251.83L1450.88 251.69L1451.10 251.54L1451.34 251.38L1451.60 251.22L1451.87 251.04L1452.15 250.86L1452.44 250.67L1452.72 250.47L1452.99 250.27L1453.25 250.07L1453.48 249.88L1453.69 249.68L1453.86 249.50L1454.00 249.31L1454.11 249.14L1454.19 248.98L1454.23 248.82L1454.25 248.67L1454.25 248.53L1454.22 248.40L1454.19 248.27L1454.14 248.14L1454.09 248.02L1454.03 247.90L1453.97 247.78L1453.91 247.66L1453.84 247.55L1453.78 247.43L1453.71 247.31L1453.64 247.20L1453.58 247.08L1453.51 246.97L1453.44 246.85L1453.38 246.74L1453.31 246.62L1453.24 246.51L1453.18 246.39L1453.11 246.28L1453.04 246.16L1452.98 246.05L1452.91 245.93L1452.84 245.82L1452.78 245.70L1452.71 245.59L1452.65 245.47L1452.58 245.36L1452.51 245.24L1452.44 245.12L1452.37 245.01L1452.30 244.90L1452.23 244.79L1452.15 244.68L1452.06 244.58L1451.97 244.48L1451.86 244.40L1451.74 244.32L1451.60 244.27L1451.44 244.23L1451.26 244.21L1451.06 244.22L1450.83 244.25L1450.58 244.30L1450.31 244.38L1450.02 244.49L1449.72 244.61L1449.42 244.75L1449.11 244.89L1448.80 245.05L1448.50 245.20L1448.21 245.35L1447.93 245.49L1447.68 245.62L1447.44 245.73L1447.23 245.83L1447.03 245.91L1446.86 245.97L1446.70 246.02L1446.56 246.04L1446.44 246.05L1446.32 246.05L1446.22 246.03L1446.13 246.01L1446.05 245.98L1445.97 245.94L1445.89 245.90L1445.81 245.85L1445.74 245.80L1445.67 245.76L1445.59 245.71L1445.52 245.66L1445.45 245.61L1445.37 245.57L1445.30 245.52L1445.22 245.47L1445.15 245.43L1445.08 245.38L1445.00 245.34L1444.92 245.30L1444.85 245.25L1444.77 245.21L1444.69 245.17L1444.62 245.13L1444.54 245.09L1444.46 245.05L1444.38 245.01L1444.31 244.97L1444.23 244.93L1444.15 244.89L1444.07 244.85L1444.00 244.80L1443.93 244.75L1443.85 244.69L1443.79 244.63L1443.72 244.55L1443.66 244.45L1443.61 244.34L1443.56 244.21L1443.52 244.05L1443.49 243.87L1443.46 243.66L1443.44 243.42L1443.42 243.16L1443.40 242.87L1443.39 242.57L1443.37 242.24L1443.35 241.90L1443.33 241.56L1443.31 241.22L1443.27 240.88L1443.23 240.56L1443.17 240.26L1443.11 239.99L1443.03 239.74L1442.94 239.53L1442.85 239.35L1442.74 239.20L1442.63 239.09L1442.51 239.00L1442.39 238.93L1442.26 238.88L1442.13 238.84L1442.00 238.82L1441.87 238.81L1441.73 238.80L1441.60 238.79L1441.46 238.79L1441.33 238.79L1441.20 238.78L1441.06 238.78L1440.93 238.78L1440.80 238.78L1440.66 238.78L1440.53 238.78L1440.40 238.78L1440.27 238.78L1440.13 238.78L1440.00 238.78L1439.87 238.78L1439.73 238.78L1439.60 238.78L1439.47 238.78L1439.34 238.78L1439.20 238.78L1439.07 238.78L1438.94 238.78L1438.80 238.78L1438.67 238.79L1438.54 238.79L1438.40 238.79L1438.27 238.80L1438.13 238.81L1438.00 238.82L1437.87 238.84L1437.74 238.88L1437.61 238.93L1437.49 239.00L1437.37 239.09L1437.26 239.20L1437.15 239.35L1437.06 239.53L1436.97 239.74L1436.89 239.99L1436.83 240.26L1436.77 240.56L1436.73 240.88L1436.69 241.22L1436.67 241.56L1436.65 241.90L1436.63 242.24L1436.61 242.57L1436.60 242.87L1436.58 243.16L1436.56 243.42L1436.54 243.66L1436.51 243.87L1436.48 244.05L1436.44 244.21L1436.39 244.34L1436.34 244.45L1436.28 244.55L1436.21 244.63L1436.15 244.69L1436.07 244.75L1436.00 244.80L1435.93 244.85L1435.85 244.89L1435.77 244.93L1435.69 244.97L1435.62 245.01L1435.54 245.05L1435.46 245.09L1435.38 245.13L1435.31 245.17L1435.23 245.21L1435.15 245.25L1435.08 245.30L1435.00 245.34L1434.92 245.38L1434.85 245.43L1434.78 245.47L1434.70 245.52L1434.63 245.57L1434.55 245.61L1434.48 245.66L1434.41 245.71L1434.33 245.76L1434.26 245.80L1434.19 245.85L1434.11 245.90L1434.03 245.94L1433.95 245.98L1433.87 246.01L1433.78 246.03L1433.68 246.05L1433.56 246.05L1433.44 246.04L1433.30 246.02L1433.14 245.97L1432.97 245.91L1432.77 245.83L1432.56 245.73L1432.32 245.62L1432.07 245.49L1431.79 245.35L1431.50 245.20L1431.20 245.05L1430.89 244.89L1430.58 244.75L1430.28 244.61L1429.98 244.49L1429.69 244.38L1429.42 244.30L1429.17 244.25L1428.94 244.22L1428.74 244.21L1428.56 244.23L1428.40 244.27L1428.26 244.32L1428.14 244.40L1428.03 244.48L1427.94 244.58L1427.85 244.68L1427.77 244.79L1427.70 244.90L1427.63 245.01L1427.56 245.12L1427.49 245.24L1427.42 245.36L1427.35 245.47L1427.29 245.59L1427.22 245.70L1427.16 245.82L1427.09 245.93L1427.02 246.05L1426.96 246.16L1426.89 246.28L1426.82 246.39L1426.76 246.51L1426.69 246.62L1426.62 246.74L1426.56 246.85L1426.49 246.97L1426.42 247.08L1426.36 247.20L1426.29 247.31L1426.22 247.43L1426.16 247.55L1426.09 247.66L1426.03 247.78L1425.97 247.90L1425.91 248.02L1425.86 248.14L1425.81 248.27L1425.78 248.40L1425.75 248.53L1425.75 248.67L1425.77 248.82L1425.81 248.98L1425.89 249.14L1426.00 249.31L1426.14 249.50L1426.31 249.68L1426.52 249.88L1426.75 250.07L1427.01 250.27L1427.28 250.47L1427.56 250.67L1427.85 250.86L1428.13 251.04L1428.40 251.22L1428.66 251.38L1428.90 251.54L1429.12 251.69L1429.31 251.83L1429.48 251.96L1429.62 252.08L1429.74 252.19L1429.83 252.30L1429.90 252.40L1429.95 252.50L1429.99 252.59L1430.01 252.69L1430.03 252.78L1430.03 252.86L1430.04 252.95L1430.04 253.04L1430.03 253.13L1430.03 253.22L1430.02 253.30L1430.02 253.39L1430.01 253.48L1430.01 253.56L1430.01 253.65L1430.00 253.74L1430.00 253.83L1430.00 253.91L1430.00 254.00L1430.00 254.09L1430.00 254.17L1430.00 254.26L1430.01 254.35L1430.01 254.44L1430.01 254.52L1430.02 254.61L1430.02 254.70L1430.03 254.78L1430.03 254.87L1430.04 254.96L1430.04 255.05L1430.03 255.14L1430.03 255.22L1430.01 255.31L1429.99 255.41L1429.95 255.50L1429.90 255.60L1429.83 255.70L1429.74 255.81L1429.62 255.92L1429.48 256.04L1429.31 256.17L1429.12 256.31L1428.90 256.46L1428.66 256.62L1428.40 256.78L1428.13 256.96L1427.85 257.14L1427.56 257.33L1427.28 257.53L1427.01 257.73L1426.75 257.93L1426.52 258.12L1426.31 258.32L1426.14 258.50L1426.00 258.69L1425.89 258.86L1425.81 259.02L1425.77 259.18L1425.75 259.33L1425.75 259.47L1425.78 259.60L1425.81 259.73L1425.86 259.86L1425.91 259.98L1425.97 260.10L1426.03 260.22L1426.09 260.34L1426.16 260.45L1426.22 260.57L1426.29 260.69L1426.36 260.80L1426.42 260.92L1426.49 261.03L1426.56 261.15L1426.62 261.26L1426.69 261.38L1426.76 261.49L1426.82 261.61L1426.89 261.72L1426.96 261.84L1427.02 261.95L1427.09 262.07L1427.16 262.18L1427.22 262.30L1427.29 262.41L1427.35 262.53L1427.42 262.64L1427.49 262.76L1427.56 262.88L1427.63 262.99L1427.70 263.10L1427.77 263.21L1427.85 263.32L1427.94 263.42L1428.03 263.52L1428.14 263.60L1428.26 263.68L1428.40 263.73L1428.56 263.77L1428.74 263.79L1428.94 263.78L1429.17 263.75L1429.42 263.70L1429.69 263.62L1429.98 263.51L1430.28 263.39L1430.58 263.25L1430.89 263.11L1431.20 262.95L1431.50 262.80L1431.79 262.65L1432.07 262.51L1432.32 262.38L1432.56 262.27L1432.77 262.17L1432.97 262.09L1433.14 262.03L1433.30 261.98L1433.44 261.96L1433.56 261.95L1433.68 261.95L1433.78 261.97L1433.87 261.99L1433.95 262.02L1434.03 262.06L1434.11 262.10L1434.19 262.15L1434.26 262.20L1434.33 262.24L1434.41 262.29L1434.48 262.34L1434.55 262.39L1434.63 262.43L1434.70 262.48L1434.78 262.53L1434.85 262.57L1434.92 262.62L1435.00 262.66L1435.08 262.70L1435.15 262.75L1435.23 262.79L1435.31 262.83L1435.38 262.87L1435.46 262.91L1435.54 262.95L1435.62 262.99L1435.69 263.03L1435.77 263.07L1435.85 263.11L1435.93 263.15L1436.00 263.20L1436.07 263.25L1436.15 263.31L1436.21 263.37L1436.28 263.45L1436.34 263.55L1436.39 263.66L1436.44 263.79L1436.48 263.95L1436.51 264.13L1436.54 264.34L1436.56 264.58L1436.58 264.84L1436.60 265.13L1436.61 265.43L1436.63 265.76L1436.65 266.10L1436.67 266.44L1436.69 266.78L1436.73 267.12L1436.77 267.44L1436.83 267.74L1436.89 268.01L1436.97 268.26L1437.06 268.47L1437.15 268.65L1437.26 268.80L1437.37 268.91L1437.49 269.00L1437.61 269.07L1437.74 269.12L1437.87 269.16L1438.00 269.18L1438.13 269.19L1438.27 269.20L1438.40 269.21L1438.54 269.21L1438.67 269.21L1438.80 269.22L1438.94 269.22L1439.07 269.22L1439.20 269.22L1439.34 269.22L1439.47 269.22L1439.60 269.22L1439.73 269.22L1439.87 269.22L1440.00 269.22L1440.13 269.22L1440.27 269.22L1440.40 269.22L1440.53 269.22L1440.66 269.22L1440.80 269.22L1440.93 269.22L1441.06 269.22L1441.20 269.22L1441.33 269.21L1441.46 269.21L1441.60 269.21L1441.73 269.20L1441.87 269.19L1442.00 269.18L1442.13 269.16L1442.26 269.12L1442.39 269.07L1442.51 269.00L1442.63 268.91L1442.74 268.80L1442.85 268.65L1442.94 268.47L1443.03 268.26L1443.11 268.01L1443.17 267.74L1443.23 267.44L1443.27 267.12L1443.31 266.78L1443.33 266.44L1443.35 266.10L1443.37 265.76L1443.39 265.43L1443.40 265.13L1443.42 264.84L1443.44 264.58L1443.46 264.34L1443.49 264.13L1443.52 263.95L1443.56 263.79L1443.61 263.66L1443.66 263.55L1443.72 263.45L1443.79 263.37L1443.85 263.31L1443.93 263.25L1444.00 263.20L1444.07 263.15L1444.15 263.11L1444.23 263.07L1444.31 263.03L1444.38 262.99L1444.46 262.95L1444.54 262.91L1444.62 262.87L1444.69 262.83L1444.77 262.79L1444.85 262.75L1444.92 262.70L1445.00 262.66L1445.08 262.62L1445.15 262.57L1445.22 262.53L1445.30 262.48L1445.37 262.43L1445.45 262.39L1445.52 262.34L1445.59 262.29L1445.67 262.24L1445.74 262.20L1445.81 262.15L1445.89 262.10L1445.97 262.06L1446.05 262.02L1446.13 261.99L1446.22 261.97L1446.32 261.95L1446.44 261.95L1446.56 261.96L1446.70 261.98L1446.86 262.03L1447.03 262.09L1447.23 262.17L1447.44 262.27L1447.68 262.38L1447.93 262.51L1448.21 262.65L1448.50 262.80L1448.80 262.95L1449.11 263.11L1449.42 263.25L1449.72 263.39L1450.02 263.51L1450.31 263.62L1450.58 263.70L1450.83 263.75L1451.06 263.78L1451.26 263.79L1451.44 263.77L1451.60 263.73L1451.74 263.68L1451.86 263.60L1451.97 263.52L1452.06 263.42L1452.15 263.32L1452.23 263.21L1452.30 263.10L1452.37 262.99L1452.44 262.88L1452.51 262.76L1452.58 262.64L1452.65 262.53L1452.71 262.41L1452.78 262.30L1452.84 262.18L1452.91 262.07L1452.98 261.95L1453.04 261.84L1453.11 261.72L1453.18 261.61L1453.24 261.49L1453.31 261.38L1453.38 261.26L1453.44 261.15L1453.51 261.03L1453.58 260.92L1453.64 260.80L1453.71 260.69L1453.78 260.57L1453.84 260.45L1453.91 260.34L1453.97 260.22L1454.03 260.10L1454.09 259.98L1454.14 259.86L1454.19 259.73L1454.22 259.60L1454.25 259.47L1454.25 259.33L1454.23 259.18L1454.19 259.02L1454.11 258.86L1454.00 258.69L1453.86 258.50L1453.69 258.32L1453.48 258.12L1453.25 257.93L1452.99 257.73L1452.72 257.53L1452.44 257.33L1452.15 257.14L1451.87 256.96L1451.60 256.78L1451.34 256.62L1451.10 256.46L1450.88 256.31L1450.69 256.17L1450.52 256.04L1450.38 255.92L1450.26 255.81L1450.17 255.70L1450.10 255.60L1450.05 255.50L1450.01 255.41L1449.99 255.31L1449.97 255.22L1449.97 255.14L1449.96 255.05L1449.96 254.96L1449.97 254.87L1449.97 254.78L1449.98 254.70L1449.98 254.61L1449.99 254.52L1449.99 254.44L1449.99 254.35L1450.00 254.26L1450.00 254.17L1450.00 254.09Z" fill="rgba(255,255,255,.27)" stroke="#fbfbfe" stroke-width="1.5" stroke-linejoin="round"/><circle cx="1440" cy="254" r="3.40" fill="#2f2f33" stroke="#fbfbfe" stroke-width="1.5"/></svg>

<!-- ===== cards ===== -->
<div class="card" style="top:364px;height:248px"><div class="pv" style="height:132px"><svg style="top:-2px" width="996" height="134.75" viewBox="0 0 680 92" preserveAspectRatio="none"><rect width="680" height="92" fill="#1c1b22"/><rect x="28" y="5" width="166" height="34" rx="4" fill="#42414d"/><rect x="51" y="20" width="121" height="4" rx="2" fill="#fbfbfe"/><rect x="221" y="20" width="121" height="4" rx="2" fill="#fbfbfe" opacity=".66"/><rect y="44" width="680" height="48" fill="#2b2a33"/><g fill="none" stroke="#fbfbfe" stroke-width="1.5"><circle cx="24" cy="68" r="6.25"/><circle cx="60" cy="68" r="6.25"/></g><rect x="114" y="52" width="488" height="32" rx="4" fill="#1c1b22"/><circle cx="130" cy="68" r="6.25" fill="none" stroke="#fbfbfe" stroke-width="1.5"/><rect x="146" y="66" width="308" height="4" rx="2" fill="#fbfbfe"/><path d="M649 61.75h14M649 67.75h14M649 73.75h14" stroke="#fbfbfe" stroke-width="1.5"/></svg></div></div><div class="btn" style="left:1271px;top:523px;width:116px"></div><div class="btn" style="left:1399px;top:523px;width:36px"><svg width="34" height="34" viewBox="1 1 34 34" style="left:0;top:0"><circle cx="11.9" cy="18" r="1.6" fill="#fbfbfe"/><circle cx="17.9" cy="18" r="1.6" fill="#fbfbfe"/><circle cx="23.9" cy="18" r="1.6" fill="#fbfbfe"/></svg></div><div class="card" style="top:687px;height:248px"><div class="pv" style="height:133px"><svg style="top:-1px" width="996" height="134.75" viewBox="0 0 680 92" preserveAspectRatio="none"><defs><filter id="sh2" x="-10%" y="-20%" width="120%" height="150%"><feDropShadow dx="0" dy="0.6" stdDeviation="1.1" flood-color="#000" flood-opacity=".38"/></filter></defs><rect width="680" height="92" fill="#f0f0f4"/><rect x="28" y="5" width="166" height="34" rx="4" fill="#fff" filter="url(#sh2)"/><rect x="51" y="20" width="121" height="4" rx="2" fill="#15141a"/><rect x="221" y="20" width="121" height="4" rx="2" fill="#15141a"/><rect y="44" width="680" height="48" fill="#f9f9fb"/><g fill="none" stroke="#5b5b66" stroke-width="1.5"><circle cx="24" cy="68" r="6.25"/><circle cx="60" cy="68" r="6.25"/></g><rect x="114" y="52" width="488" height="32" rx="4" fill="#f0f0f4"/><circle cx="130" cy="68" r="6.25" fill="none" stroke="#5b5b66" stroke-width="1.5"/><rect x="146" y="66" width="308" height="4" rx="2" fill="#5b5b66"/><path d="M649 61.75h14M649 67.75h14M649 73.75h14" stroke="#5b5b66" stroke-width="1.5"/></svg></div></div><div class="btn" style="left:1301px;top:846px;width:86px"></div><div class="btn" style="left:1399px;top:846px;width:36px"><svg width="34" height="34" viewBox="1 1 34 34" style="left:0;top:0"><circle cx="11.9" cy="18" r="1.6" fill="#fbfbfe"/><circle cx="17.9" cy="18" r="1.6" fill="#fbfbfe"/><circle cx="23.9" cy="18" r="1.6" fill="#fbfbfe"/></svg></div><div class="card" style="top:959px;height:249px"><div class="pv" style="height:133px"><svg style="top:-1px" width="996" height="134.75" viewBox="0 0 680 92" preserveAspectRatio="none"><defs><filter id="sh3" x="-10%" y="-20%" width="120%" height="150%"><feDropShadow dx="0" dy="0.6" stdDeviation="1.1" flood-color="#000" flood-opacity=".38"/></filter></defs><defs><clipPath id="sc"><path d="M330 0C320 0 312 10 312 22C312 34 303 44 292 44H250C238 44 228 56 228 68C228 80 218 92 206 92H680V0Z"/></clipPath></defs><rect width="680" height="92" fill="#f0f0f4"/><rect x="28" y="5" width="166" height="34" rx="4" fill="#fff" filter="url(#sh3)"/><rect x="51" y="20" width="121" height="4" rx="2" fill="#15141a"/><rect x="221" y="20" width="121" height="4" rx="2" fill="#15141a"/><rect y="44" width="680" height="48" fill="#f9f9fb"/><g fill="none" stroke="#5b5b66" stroke-width="1.5"><circle cx="24" cy="68" r="6.25"/><circle cx="60" cy="68" r="6.25"/></g><rect x="114" y="52" width="488" height="32" rx="4" fill="#f0f0f4"/><circle cx="130" cy="68" r="6.25" fill="none" stroke="#5b5b66" stroke-width="1.5"/><rect x="146" y="66" width="308" height="4" rx="2" fill="#5b5b66"/><path d="M649 61.75h14M649 67.75h14M649 73.75h14" stroke="#5b5b66" stroke-width="1.5"/><g clip-path="url(#sc)"><rect width="680" height="92" fill="#1c1b22"/><rect x="28" y="5" width="166" height="34" rx="4" fill="#42414d"/><rect x="51" y="20" width="121" height="4" rx="2" fill="#fbfbfe"/><rect x="221" y="20" width="121" height="4" rx="2" fill="#fbfbfe" opacity=".66"/><rect y="44" width="680" height="48" fill="#2b2a33"/><g fill="none" stroke="#fbfbfe" stroke-width="1.5"><circle cx="24" cy="68" r="6.25"/><circle cx="60" cy="68" r="6.25"/></g><rect x="114" y="52" width="488" height="32" rx="4" fill="#1c1b22"/><circle cx="130" cy="68" r="6.25" fill="none" stroke="#fbfbfe" stroke-width="1.5"/><rect x="146" y="66" width="308" height="4" rx="2" fill="#fbfbfe"/><path d="M649 61.75h14M649 67.75h14M649 73.75h14" stroke="#fbfbfe" stroke-width="1.5"/></g></svg></div></div><div class="btn" style="left:1301px;top:1118px;width:86px"></div><div class="btn" style="left:1399px;top:1118px;width:36px"><svg width="34" height="34" viewBox="1 1 34 34" style="left:0;top:0"><circle cx="11.9" cy="18" r="1.6" fill="#fbfbfe"/><circle cx="17.9" cy="18" r="1.6" fill="#fbfbfe"/><circle cx="23.9" cy="18" r="1.6" fill="#fbfbfe"/></svg></div><span class="t" style="left:486.6px;top:529px;font-size:21.6px;line-height:28px;font-weight:400;color:#fbfbfe;letter-spacing:0.463px;-webkit-text-stroke:0.82px #fbfbfe;">Sombre</span><span class="t" style="left:486.6px;top:563px;font-size:19.0px;line-height:25px;font-weight:400;color:#b9b9be;letter-spacing:0.122px;">Un thème avec des couleurs sombres.</span><span class="t" style="left:1284.6px;top:529px;font-size:20px;line-height:26px;font-weight:400;color:#fbfbfe;letter-spacing:-0.508px;">Désactiver</span><span class="t" style="left:486.6px;top:852px;font-size:21.6px;line-height:28px;font-weight:400;color:#fbfbfe;letter-spacing:0.122px;-webkit-text-stroke:0.82px #fbfbfe;">Clair</span><span class="t" style="left:486.6px;top:886px;font-size:19.0px;line-height:25px;font-weight:400;color:#b9b9be;letter-spacing:0.058px;">Un thème avec des couleurs claires.</span><span class="t" style="left:1314.0px;top:852px;font-size:20px;line-height:26px;font-weight:400;color:#fbfbfe;letter-spacing:-0.161px;">Activer</span><span class="t" style="left:486.6px;top:1124px;font-size:21.6px;line-height:28px;font-weight:400;color:#fbfbfe;letter-spacing:0.617px;-webkit-text-stroke:0.82px #fbfbfe;">Thème système — automatique</span><span class="t" style="left:486.6px;top:1158px;font-size:19.0px;line-height:25px;font-weight:400;color:#b9b9be;letter-spacing:0.212px;">Utiliser les paramètres du système pour les boutons, menus et fenêtres.</span><span class="t" style="left:1314.0px;top:1124px;font-size:20px;line-height:26px;font-weight:400;color:#fbfbfe;letter-spacing:-0.161px;">Activer</span>

<!-- status bar -->
<div class="abs" style="left:106px;top:1481px;width:1px;height:26px;background:#4a4a4f"></div>
<svg width="2059" height="1507" viewBox="0 0 2059 1507" style="left:0;top:0;pointer-events:none"><g fill="none" stroke="#ececf0" stroke-width="1.8" stroke-linecap="round"><circle cx="84.8" cy="1497.9" r="2.2" stroke-width="1.9"/><path d="M80.65 1492.39A6.9 6.9 0 0 0 80.65 1503.41M88.95 1492.39A6.9 6.9 0 0 1 88.95 1503.41"/><path d="M77.44 1489.73A11.0 11.0 0 0 0 77.44 1506.07M92.16 1489.73A11.0 11.0 0 0 1 92.16 1506.07"/></g></svg>
</body>
</html>
